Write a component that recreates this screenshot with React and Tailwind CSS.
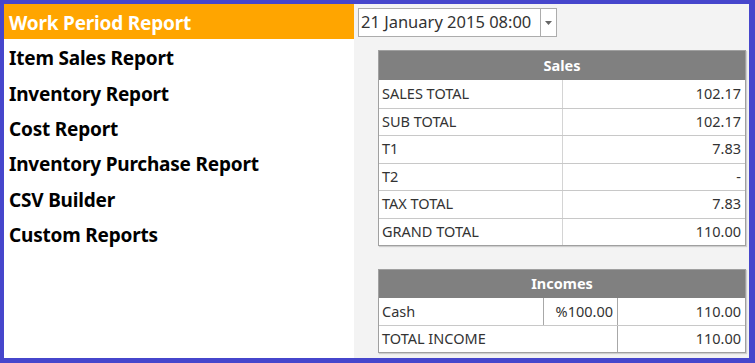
import React from "react";

const menu = [
  "Work Period Report",
  "Item Sales Report",
  "Inventory Report",
  "Cost Report",
  "Inventory Purchase Report",
  "CSV Builder",
  "Custom Reports",
];

const sales = [
  ["SALES TOTAL", "102.17"],
  ["SUB TOTAL", "102.17"],
  ["T1", "7.83"],
  ["T2", "-"],
  ["TAX TOTAL", "7.83"],
  ["GRAND TOTAL", "110.00"],
];

export default function App() {
  const font = { fontFamily: '"Noto Sans", "Open Sans", sans-serif' };
  return (
    <div
      className="w-[755px] h-[363px] bg-[#4646cc] pl-[4px] pt-[4px] pr-[6px] pb-[5px] flex"
      style={font}
    >
      <div className="w-[350px] h-full bg-white flex flex-col">
        {menu.map((m, i) => (
          <div
            key={m}
            className={
              "h-[35.3px] flex items-center pl-[5px] pt-[4px] text-[19px] font-bold leading-none tracking-[-0.2px] " +
              (i === 0 ? "bg-[#ffa500] text-white" : "text-black")
            }
          >
            {m}
          </div>
        ))}
      </div>
      <div className="flex-1 h-full bg-[#f3f3f3] flex flex-col pl-[4px] pt-[4px]">
        <div className="w-[199px] h-[29px] border border-[#acacac] bg-white flex">
          <div className="flex-1 flex items-center pl-[2px] text-[16.5px] text-[#333] leading-none">
            21 January 2015 08:00
          </div>
          <div className="w-[16px] border-l border-[#acacac] flex items-center justify-center">
            <svg width="7" height="4" viewBox="0 0 7 4">
              <path d="M0 0h7L3.5 4z" fill="#666" />
            </svg>
          </div>
        </div>
        <div className="ml-[20px] mt-[13px] w-[368px] border border-[#a0a0a0] bg-white text-[14.5px] text-[#333] shadow-[1px_1px_1px_rgba(0,0,0,0.15)]">
          <div className="h-[29px] bg-[#808080] text-white font-bold flex items-center justify-center">
            Sales
          </div>
          {sales.map(([k, v], i) => (
            <div
              key={k}
              className={
                "h-[27.5px] flex " + (i > 0 ? "border-t border-[#c8c8c8]" : "")
              }
            >
              <div className="w-[184px] border-r border-[#d4d4d4] flex items-center pl-[3px]">
                {k}
              </div>
              <div className="flex-1 flex items-center justify-end pr-[4px]">
                {v}
              </div>
            </div>
          ))}
        </div>
        <div className="ml-[20px] mt-[23px] w-[368px] border border-[#a0a0a0] bg-white text-[14.5px] text-[#333] shadow-[1px_1px_1px_rgba(0,0,0,0.15)]">
          <div className="h-[28px] bg-[#808080] text-white font-bold flex items-center justify-center">
            Incomes
          </div>
          <div className="h-[27px] flex">
            <div className="w-[165px] border-r border-[#a8a8a8] flex items-center pl-[3px]">
              Cash
            </div>
            <div className="w-[74px] border-r border-[#a8a8a8] flex items-center justify-end pr-[4px]">
              %100.00
            </div>
            <div className="flex-1 flex items-center justify-end pr-[4px]">
              110.00
            </div>
          </div>
          <div className="h-[27px] flex border-t border-[#c8c8c8]">
            <div className="w-[239px] border-r border-[#a8a8a8] flex items-center pl-[3px]">
              TOTAL INCOME
            </div>
            <div className="flex-1 flex items-center justify-end pr-[4px]">
              110.00
            </div>
          </div>
        </div>
      </div>
    </div>
  );
}
